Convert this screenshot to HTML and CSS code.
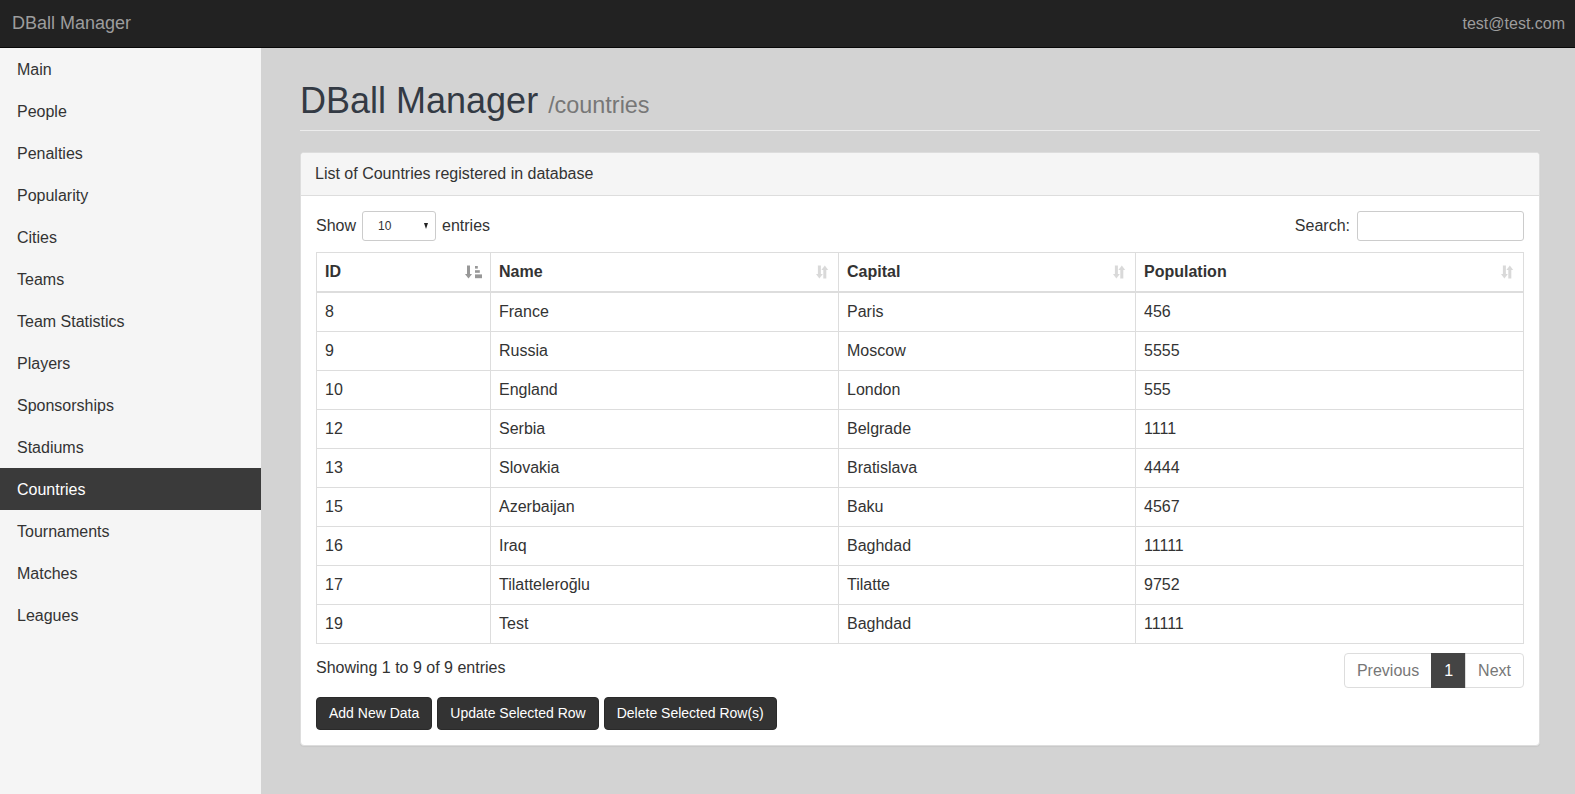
FILE: index.html
```html
<!DOCTYPE html>
<html>
<head>
<meta charset="utf-8">
<title>DBall Manager</title>
<link rel="stylesheet" href="styles.css">
</head>
<body>
<header class="navbar">
  <span class="brand">DBall Manager</span>
  <span class="user">test@test.com</span>
</header>
<div class="layout">
  <nav class="sidebar">
    <ul class="menu">
      <li class="menu-item">Main</li>
      <li class="menu-item">People</li>
      <li class="menu-item">Penalties</li>
      <li class="menu-item">Popularity</li>
      <li class="menu-item">Cities</li>
      <li class="menu-item">Teams</li>
      <li class="menu-item">Team Statistics</li>
      <li class="menu-item">Players</li>
      <li class="menu-item">Sponsorships</li>
      <li class="menu-item">Stadiums</li>
      <li class="menu-item active">Countries</li>
      <li class="menu-item">Tournaments</li>
      <li class="menu-item">Matches</li>
      <li class="menu-item">Leagues</li>
    </ul>
  </nav>
  <main class="content">
    <h1 class="page-header">DBall Manager <small class="sub">/countries</small></h1>
    <section class="panel">
      <div class="panel-heading">List of Countries registered in database</div>
      <div class="panel-body">
        <div class="dt-top">
          <label class="length">Show <span class="select"><span class="select-val">10</span><span class="select-arrow"></span></span> entries</label>
          <label class="search">Search: <span class="search-input"></span></label>
        </div>
        <table class="table">
          <colgroup>
            <col class="c-id"><col class="c-name"><col class="c-cap"><col class="c-pop">
          </colgroup>
          <thead>
            <tr>
              <th><span class="th-inner">ID<svg class="sort active-sort" viewBox="0 0 17 14" width="17" height="14"><rect x="2" y="0.5" width="3" height="9"/><polygon points="0,9 7,9 3.5,13.5"/><rect x="10" y="1" width="2.8" height="2.6"/><rect x="10" y="5.2" width="4.8" height="2.6"/><rect x="10" y="9.4" width="7" height="3.8"/></svg></span></th>
              <th><span class="th-inner">Name<svg class="sort" viewBox="0 0 14 14" width="14" height="14"><rect x="1.9" y="0.5" width="3" height="9"/><polygon points="0,9 6.8,9 3.4,13.5"/><polygon points="5.4,5 12.2,5 8.8,0.5"/><rect x="7.3" y="4.5" width="3" height="9"/></svg></span></th>
              <th><span class="th-inner">Capital<svg class="sort" viewBox="0 0 14 14" width="14" height="14"><rect x="1.9" y="0.5" width="3" height="9"/><polygon points="0,9 6.8,9 3.4,13.5"/><polygon points="5.4,5 12.2,5 8.8,0.5"/><rect x="7.3" y="4.5" width="3" height="9"/></svg></span></th>
              <th><span class="th-inner">Population<svg class="sort" viewBox="0 0 14 14" width="14" height="14"><rect x="1.9" y="0.5" width="3" height="9"/><polygon points="0,9 6.8,9 3.4,13.5"/><polygon points="5.4,5 12.2,5 8.8,0.5"/><rect x="7.3" y="4.5" width="3" height="9"/></svg></span></th>
            </tr>
          </thead>
          <tbody>
            <tr><td>8</td><td>France</td><td>Paris</td><td>456</td></tr>
            <tr><td>9</td><td>Russia</td><td>Moscow</td><td>5555</td></tr>
            <tr><td>10</td><td>England</td><td>London</td><td>555</td></tr>
            <tr><td>12</td><td>Serbia</td><td>Belgrade</td><td>1111</td></tr>
            <tr><td>13</td><td>Slovakia</td><td>Bratislava</td><td>4444</td></tr>
            <tr><td>15</td><td>Azerbaijan</td><td>Baku</td><td>4567</td></tr>
            <tr><td>16</td><td>Iraq</td><td>Baghdad</td><td>11111</td></tr>
            <tr><td>17</td><td>Tilatteleroğlu</td><td>Tilatte</td><td>9752</td></tr>
            <tr><td>19</td><td>Test</td><td>Baghdad</td><td>11111</td></tr>
          </tbody>
        </table>
        <div class="dt-bottom">
          <div class="info">Showing 1 to 9 of 9 entries</div>
          <ul class="pagination">
            <li class="page disabled">Previous</li>
            <li class="page current">1</li>
            <li class="page disabled">Next</li>
          </ul>
        </div>
        <div class="actions">
          <button class="btn">Add New Data</button>
          <button class="btn">Update Selected Row</button>
          <button class="btn">Delete Selected Row(s)</button>
        </div>
      </div>
    </section>
  </main>
</div>
</body>
</html>
```

FILE: styles.css
```css
* { box-sizing: border-box; }
html, body { margin: 0; padding: 0; height: 100%; }
body {
  font-family: "Liberation Sans", Arial, sans-serif;
  font-size: 16px;
  color: #333;
  background: #d3d3d3;
}
.navbar {
  height: 48px;
  background: #222;
  border-bottom: 1px solid #080808;
  display: flex;
  align-items: center;
  justify-content: space-between;
  padding: 0 10px 0 12px;
}
.brand { font-size: 18px; color: #9d9d9d; }
.user { font-size: 16px; color: #9d9d9d; }
.layout {
  display: flex;
  min-height: calc(100% - 48px);
}
.sidebar {
  width: 261px;
  flex: 0 0 261px;
  background: #f5f5f5;
}
.menu { list-style: none; margin: 0; padding: 0; }
.menu-item {
  height: 42px;
  line-height: 42px;
  padding-top: 1px;
  padding-left: 17px;
  font-size: 16px;
  color: #333;
}
.menu-item.active { background: #3a3a3a; color: #fff; }
.content {
  flex: 1;
  padding: 0 35px 0 39px;
}
.page-header {
  margin: 33px 0 21px;
  padding-bottom: 9px;
  border-bottom: 1px solid #ececec;
  font-size: 36px;
  font-weight: 500;
  line-height: 39.6px;
  color: #333a44;
}
.sub { font-size: 23.4px; line-height: 1; color: #777; font-weight: normal; }
.panel {
  background: #fff;
  border: 1px solid #ddd;
  border-radius: 4px;
  box-shadow: 0 1px 1px rgba(0,0,0,.05);
}
.panel-heading {
  background: #f5f5f5;
  border-bottom: 1px solid #ddd;
  border-radius: 3px 3px 0 0;
  padding: 10px 14px;
  height: 43px;
  line-height: 22px;
}
.panel-body { padding: 15px; }
.dt-top {
  display: flex;
  justify-content: space-between;
  align-items: center;
  height: 30px;
  margin-bottom: 11px;
}
.length, .search { display: flex; align-items: center; gap: 6px; }
.search { gap: 7px; }
.select {
  display: inline-flex;
  align-items: center;
  justify-content: space-between;
  width: 74px;
  height: 30px;
  border: 1px solid #ccc;
  border-radius: 3px;
  padding: 0 7px 0 15px;
  font-size: 12px;
}
.select-arrow {
  width: 0;
  height: 0;
  border-left: 2.5px solid transparent;
  border-right: 2.5px solid transparent;
  border-top: 6px solid #222;
}
.search-input {
  display: inline-block;
  width: 167px;
  height: 30px;
  border: 1px solid #ccc;
  border-radius: 3px;
}
.table {
  width: 100%;
  border-collapse: collapse;
  table-layout: fixed;
}
.c-id { width: 174px; }
.c-name { width: 348px; }
.c-cap { width: 297px; }
.table th, .table td {
  border: 1px solid #ddd;
  padding: 8px;
  line-height: 22px;
  text-align: left;
  font-size: 16px;
}
.table th { font-weight: bold; border-bottom-width: 2px; }
.th-inner { display: flex; justify-content: space-between; align-items: center; }
.sort { fill: #333; opacity: 0.18; }
.sort.active-sort { opacity: 0.5; }
.dt-bottom {
  display: flex;
  justify-content: space-between;
  align-items: center;
  margin-top: 9px;
}
.info { font-size: 16px; margin-top: -4px; }
.pagination {
  list-style: none;
  margin: 0;
  padding: 0;
  display: flex;
}
.page {
  height: 35px;
  line-height: 33px;
  padding: 0 12px;
  border: 1px solid #ddd;
  color: #777;
  font-size: 16px;
  background: #fff;
}
.page + .page { margin-left: -1px; }
.page:first-child { border-radius: 4px 0 0 4px; }
.page:last-child { border-radius: 0 4px 4px 0; }
.page.current { background: #444; border-color: #444; color: #fff; }
.actions { display: flex; gap: 5px; margin-top: 9px; }
.btn {
  font-family: "Liberation Sans", Arial, sans-serif;
  font-size: 14px;
  color: #fff;
  background: #333;
  border: 1px solid #2a2a2a;
  border-radius: 4px;
  height: 33px;
  padding: 0 12px;
  line-height: 20px;
}
```
